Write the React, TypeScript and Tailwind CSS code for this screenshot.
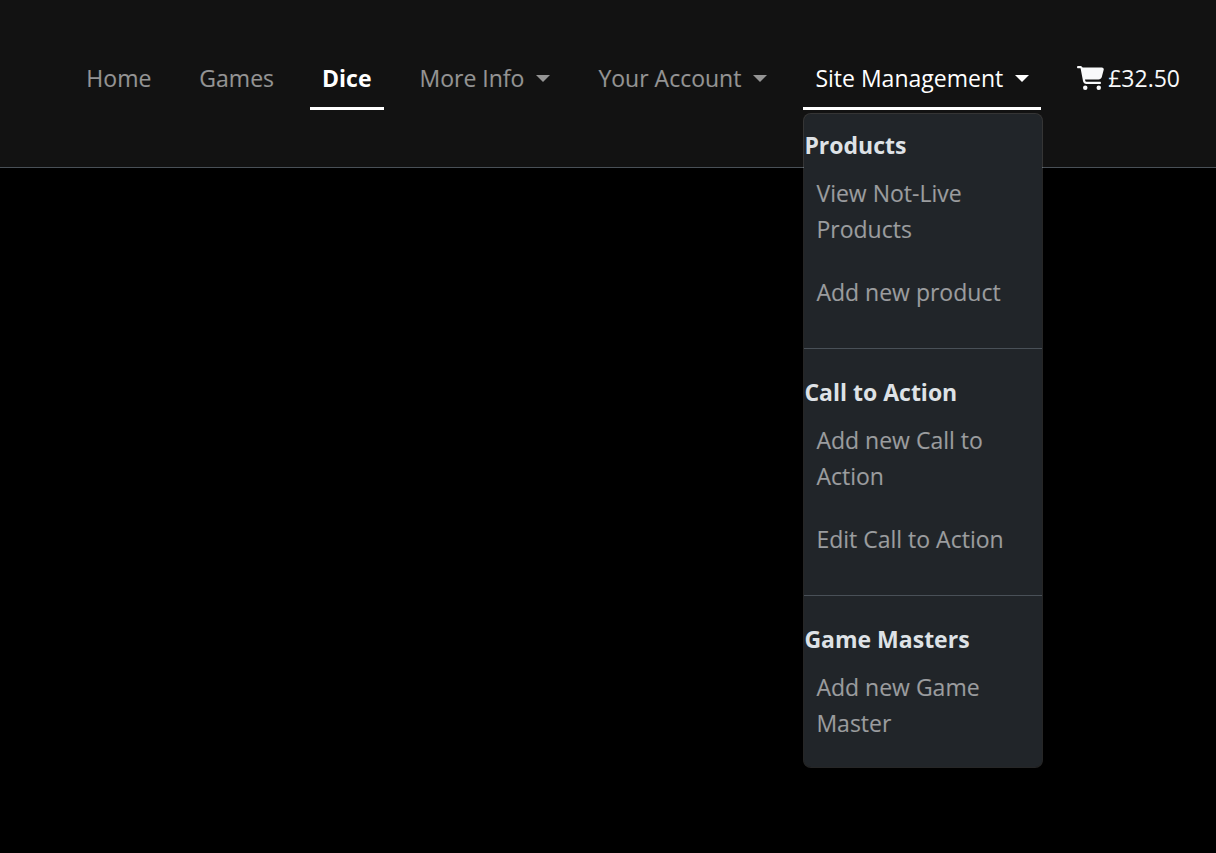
import { FaCartShopping } from "react-icons/fa6";

const linkBase = "border-b-3 px-3 pt-[13px] pb-[11px] leading-9 whitespace-nowrap";
const idle = "border-transparent text-white/55 hover:text-white";

const sections = [
  { title: "Products", links: ["View Not-Live Products", "Add new product"] },
  { title: "Call to Action", links: ["Add new Call to Action", "Edit Call to Action"] },
  { title: "Game Masters", links: ["Add new Game Master"] },
];

function Caret() {
  return (
    <svg className="mb-1 ml-3 inline-block h-[7px] w-[14px] align-middle" viewBox="0 0 14 7" aria-hidden="true">
      <path d="M0 0h14L7 7z" fill="currentColor" />
    </svg>
  );
}

function SiteMenu() {
  return (
    <div className="absolute top-full left-0 z-10 mt-[3px] w-60 rounded-lg border border-white/15 bg-[#212529] bg-clip-padding pt-[13px] pb-[11px]">
      {sections.map((section, i) => (
        <section key={section.title}>
          {i > 0 && <hr className="mt-[23px] mb-[25px] border-[#495057]" />}
          <h2 className="leading-9 font-bold text-[#dee2e6]">{section.title}</h2>
          <ul>
            {section.links.map((label) => (
              <li key={label}>
                <a href="#" className="block border-b-3 border-transparent px-3 py-3 leading-9 text-white/55 hover:text-white">
                  {label}
                </a>
              </li>
            ))}
          </ul>
        </section>
      ))}
    </div>
  );
}

export default function App() {
  return (
    <div className="min-h-screen bg-black font-['Open_Sans','Noto_Sans',sans-serif] text-[23px]">
      <header className="border-b border-[#495057] bg-[#121212] px-6 pt-[47px] pb-[57px]">
        <nav aria-label="Main" className="flex items-start justify-end gap-6">
          <a href="#" className={`${linkBase} ${idle}`}>Home</a>
          <a href="#" className={`${linkBase} ${idle}`}>Games</a>
          <a href="#" aria-current="page" className={`${linkBase} border-white font-bold text-white`}>Dice</a>
          <button type="button" className={`${linkBase} ${idle}`}>More Info<Caret /></button>
          <button type="button" className={`${linkBase} ${idle}`}>Your Account<Caret /></button>
          <div className="relative">
            <button type="button" aria-expanded="true" className={`${linkBase} border-white text-white`}>
              Site Management<Caret />
            </button>
            <SiteMenu />
          </div>
          <a href="#" className={`${linkBase} flex items-center gap-1 border-transparent text-[#f8f9fa]`}>
            <FaCartShopping className="h-6 w-[27px]" aria-hidden="true" />
            £32.50
          </a>
        </nav>
      </header>
    </div>
  );
}
